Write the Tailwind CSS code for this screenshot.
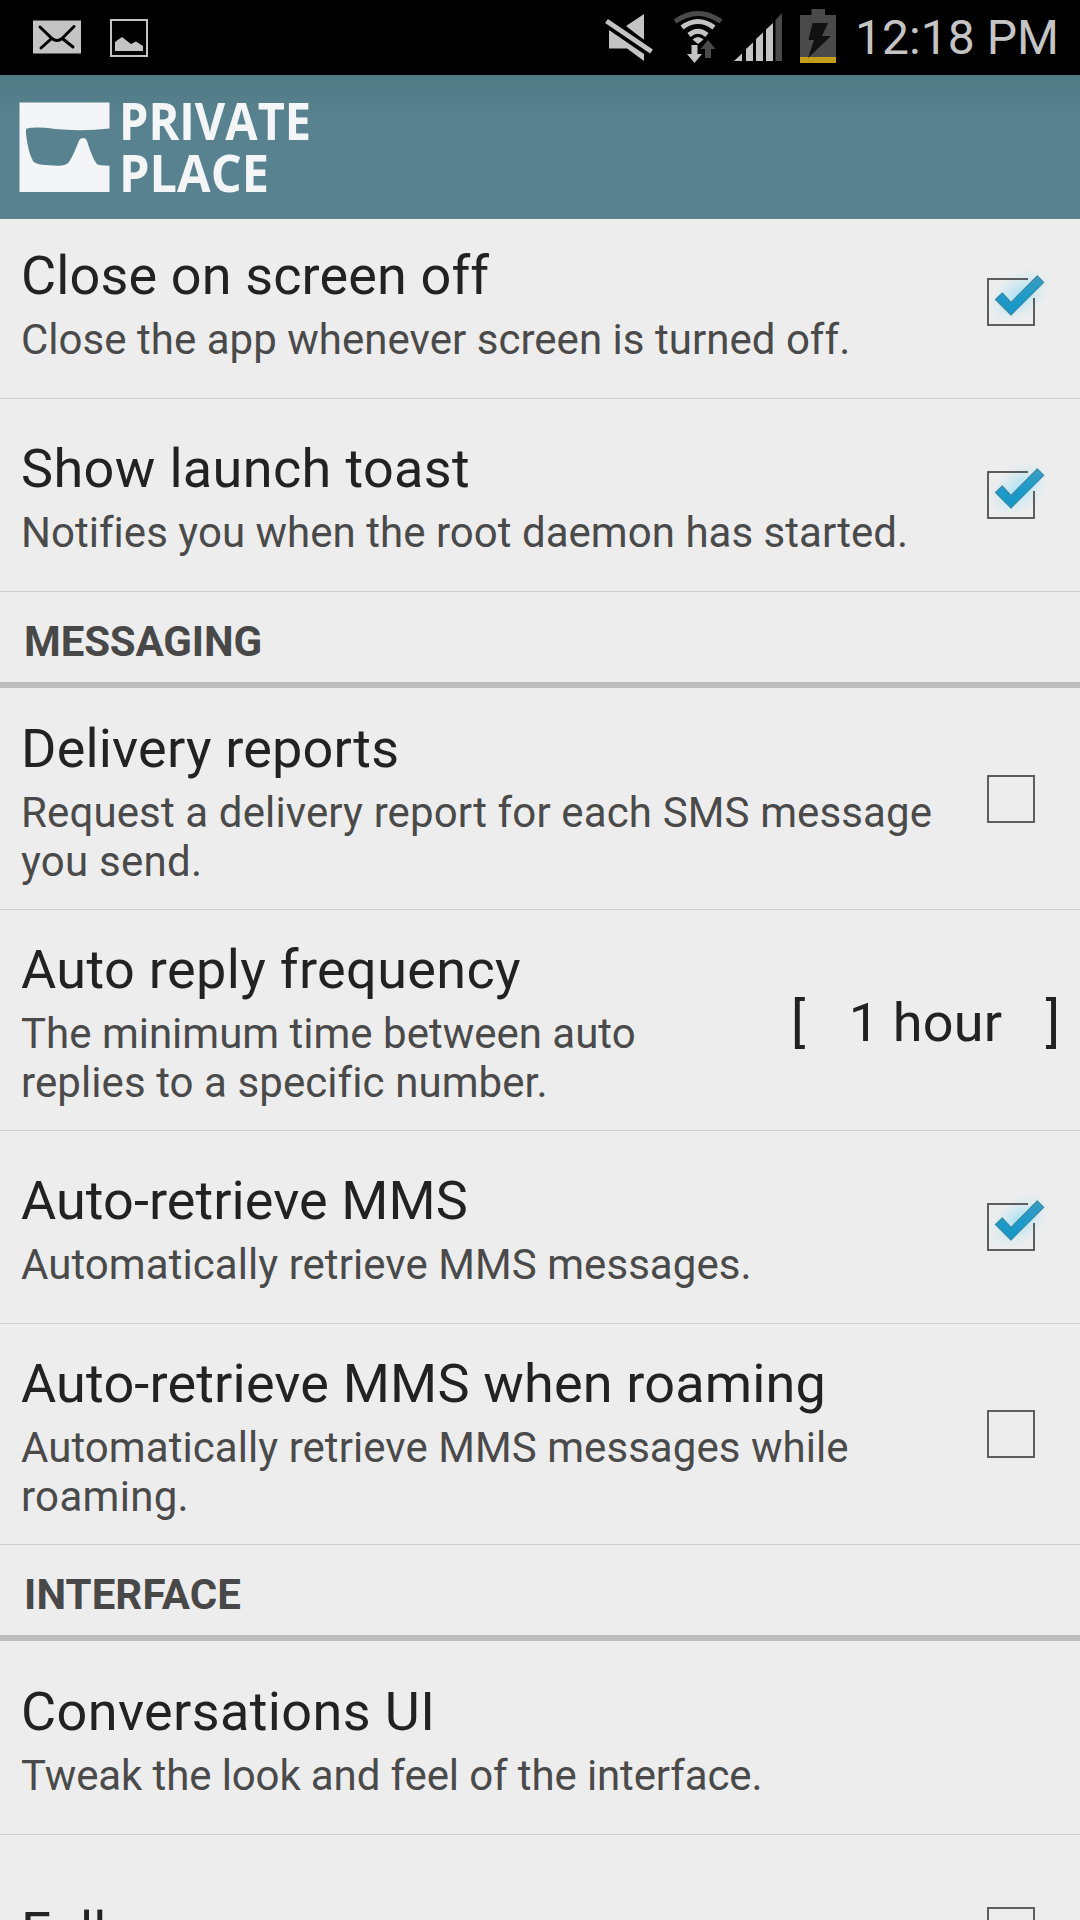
<!DOCTYPE html>
<html lang="en">
<head>
<meta charset="utf-8">
<title>Private Place</title>
<script src="https://cdn.jsdelivr.net/npm/@tailwindcss/browser@4"></script>
</head>
<body class="w-[1080px] h-[1920px] overflow-hidden bg-[#ededed] font-[Roboto,sans-serif] text-[#222] flex flex-col">
<svg width="0" height="0" class="absolute">
  <defs>
    <radialGradient id="glow"><stop offset="0" stop-color="#8fdcf5" stop-opacity=".75"/><stop offset=".5" stop-color="#b5e6f5" stop-opacity=".45"/><stop offset="1" stop-color="#ededed" stop-opacity="0"/></radialGradient>
    <linearGradient id="tick" x1="0" y1="0" x2="0" y2="1"><stop offset="0" stop-color="#3d9cc0"/><stop offset=".5" stop-color="#1f9bca"/><stop offset="1" stop-color="#1596c6"/></linearGradient>
  </defs>
  <symbol id="box" viewBox="0 0 120 104"><rect x="28" y="29" width="46" height="46" fill="none" stroke="#5e5e5e" stroke-width="2"/></symbol>
  <symbol id="boxon" viewBox="0 0 120 104">
    <ellipse cx="59" cy="46" rx="40" ry="25" transform="rotate(-38 59 46)" fill="url(#glow)"/>
    <path d="M68 29H28V75H74V48" fill="none" stroke="#5e5e5e" stroke-width="2"/>
    <path d="M35.500 49.500L42.300 43L51 52.500L77.300 25.800L83.700 32.300L51 65Z" fill="url(#tick)" stroke="#3b8aa6" stroke-width="1.200" stroke-linejoin="round"/>
  </symbol>
</svg>

<header class="h-[75px] shrink-0 bg-black">
  <svg width="1080" height="75" viewBox="0 0 1080 75" fill="#c4c4c4">
    <rect x="33" y="20.500" width="48" height="33"/>
    <path d="M40 27L52 38.500Q57 42.500 62 38.500L74 26.500M41 48L51 39M63 39L73 47" fill="none" stroke="#000" stroke-width="3" stroke-linecap="round"/>
    <rect x="111" y="20" width="36" height="36" fill="none" stroke="#c4c4c4" stroke-width="2"/>
    <path d="M115 51V42L122 37L131 44L136 41.500L143 46V51Z"/>
    <path d="M626 26L644 14V40ZM609 30L644 54V61L627 48.500H609Z"/>
    <path d="M606 21L652 51.500" stroke="#000" stroke-width="11"/>
    <path d="M606.500 21L651.500 51.500" stroke="#c4c4c4" stroke-width="5"/>
    <g fill="none" stroke="#c4c4c4" stroke-width="5">
      <path d="M675 21.500Q698 5.500 721 21.500" stroke="#4a4a4a"/>
      <path d="M682 27.500Q698 15.500 714 27.500"/>
      <path d="M689 35Q698 27.500 707 35"/>
    </g>
    <path d="M698 44L692.500 39.500Q698 34.500 703.500 39.500Z"/>
    <path d="M691.500 45H697.500V54H702L694.500 63L687 54H691.500Z"/>
    <path d="M708 40L715.500 49H711V58H705V49H700.500Z" fill="#4a4a4a"/>
    <path d="M734 61L742 53.500V61ZM746 61V49L753 42.500V61ZM756 61V39L763 32.500V61ZM766 61V29.500L773 23V61Z"/>
    <path d="M775.500 61V20L782 13V61Z" fill="#4a4a4a"/>
    <path d="M811.500 9H825V15H836V57H800V15H811.500Z" fill="#4a4a4a"/>
    <rect x="800" y="57" width="36" height="6" fill="#c49e1a"/>
    <path d="M812.500 23H828L822 36H831L808 58L814 40H808.500Z" fill="#111"/>
    <text x="855" y="54" font-size="48" class="font-[Roboto,sans-serif]" textLength="204">12:18 PM</text>
  </svg>
</header>

<div class="h-[144px] shrink-0 bg-linear-to-b from-[#4f7b84] to-[#58828f] to-30%">
  <svg width="400" height="144" viewBox="0 75 400 144" fill="#f3f5f6">
    <path d="M19.500 102.500H109.500V128.500Q82 131.500 55 129Q36 126.500 27 128.500Q25.500 129 26 134Q28 152 33 161Q35 165 54 165.500Q66 166.500 69 162Q74 154 79 140.500Q80 138 83 138Q86 138 87 141Q93 160 97 164Q98.500 165.700 109.500 165.700V192H19.500Z"/>
    <text x="119" y="140" font-size="52" font-weight="700" font-family="Open Sans" textLength="192" lengthAdjust="spacingAndGlyphs">PRIVATE</text>
    <text x="119" y="191.500" font-size="52" font-weight="700" font-family="Open Sans" textLength="150" lengthAdjust="spacingAndGlyphs">PLACE</text>
  </svg>
</div>

<main class="flex flex-col">
  <section class="h-[180px] flex items-end border-b border-[#d0d0d0]">
    <div class="h-[192px] pt-[33px] pl-[21px] flex-1 shrink-0 whitespace-nowrap"><h2 class="text-[54px] leading-[73px] tracking-[0.13px]">Close on screen off</h2><p class="mt-[3px] text-[42px] leading-[49px] text-[#4a4a4a] tracking-[0.03px]">Close the app whenever screen is turned off.</p></div>
    <svg class="w-[120px] h-[104px] mb-[44px] shrink-0"><use href="#boxon"/></svg>
  </section>
  <section class="h-[193px] flex items-center border-b border-[#d0d0d0]">
    <div class="h-[192px] pt-[33px] pl-[21px] flex-1 whitespace-nowrap"><h2 class="text-[54px] leading-[73px] tracking-[0.36px]">Show launch toast</h2><p class="mt-[3px] text-[42px] leading-[49px] text-[#4a4a4a] tracking-[0.03px]">Notifies you when the root daemon has started.</p></div>
    <svg class="w-[120px] h-[104px] shrink-0"><use href="#boxon"/></svg>
  </section>
  <h3 class="h-[96px] mb-px border-b-[6px] border-[#bebebe] pl-[24px] pt-[25px] text-[42px] leading-[49px] font-bold text-[#484848] tracking-[-0.13px]">MESSAGING</h3>
  <section class="h-[221px] flex items-center border-b border-[#d0d0d0]">
    <div class="h-[220px] pt-[23px] pl-[21px] flex-1 whitespace-nowrap"><h2 class="text-[54px] leading-[73px] tracking-[0.19px]">Delivery reports</h2><p class="mt-[3px] text-[42px] leading-[49px] text-[#4a4a4a] tracking-[0.13px]">Request a delivery report for each SMS message<br><span class="tracking-[0.25px]">you send.</span></p></div>
    <svg class="w-[120px] h-[104px] shrink-0"><use href="#box"/></svg>
  </section>
  <section class="h-[221px] flex items-center border-b border-[#d0d0d0]">
    <div class="h-[220px] pt-[23px] pl-[21px] flex-1 whitespace-nowrap"><h2 class="text-[54px] leading-[73px] tracking-[0.36px]">Auto reply frequency</h2><p class="mt-[3px] text-[42px] leading-[49px] text-[#4a4a4a]">The minimum time between auto<br><span class="tracking-[0.08px]">replies to a specific number.</span></p></div>
    <div class="w-[269px] mr-[20px] flex justify-between text-[54px] leading-[64px] pt-[5px]"><span>[</span><span class="tracking-[0.2px]">1 hour</span><span>]</span></div>
  </section>
  <section class="h-[193px] flex items-center border-b border-[#d0d0d0]">
    <div class="h-[192px] pt-[33px] pl-[21px] flex-1 whitespace-nowrap"><h2 class="text-[54px] leading-[73px] tracking-[0.07px]">Auto-retrieve MMS</h2><p class="mt-[3px] text-[42px] leading-[49px] text-[#4a4a4a] tracking-[0.06px]">Automatically retrieve MMS messages.</p></div>
    <svg class="w-[120px] h-[104px] shrink-0"><use href="#boxon"/></svg>
  </section>
  <section class="h-[221px] flex items-center border-b border-[#d0d0d0]">
    <div class="h-[220px] pt-[23px] pl-[21px] flex-1 whitespace-nowrap"><h2 class="text-[54px] leading-[73px] tracking-[0.18px]">Auto-retrieve MMS when roaming</h2><p class="mt-[3px] text-[42px] leading-[49px] text-[#4a4a4a] tracking-[0.06px]">Automatically retrieve MMS messages while<br><span class="tracking-[0.3px]">roaming.</span></p></div>
    <svg class="w-[120px] h-[104px] shrink-0"><use href="#box"/></svg>
  </section>
  <h3 class="h-[96px] mb-px border-b-[6px] border-[#bebebe] pl-[24px] pt-[25px] text-[42px] leading-[49px] font-bold text-[#484848] tracking-[0.1px]">INTERFACE</h3>
  <section class="h-[193px] border-b border-[#d0d0d0]">
    <div class="h-[192px] pt-[33px] pl-[21px] whitespace-nowrap"><h2 class="text-[54px] leading-[73px] tracking-[0.38px]">Conversations UI</h2><p class="mt-[3px] text-[42px] leading-[49px] text-[#4a4a4a] tracking-[-0.12px]">Tweak the look and feel of the interface.</p></div>
  </section>
  <section class="h-[192px] flex items-center">
    <h2 class="flex-1 pl-[21px] pt-[2px] text-[54px] leading-[64px]">Full screen</h2>
    <svg class="w-[120px] h-[104px] shrink-0"><use href="#box"/></svg>
  </section>
</main>
</body>
</html>
